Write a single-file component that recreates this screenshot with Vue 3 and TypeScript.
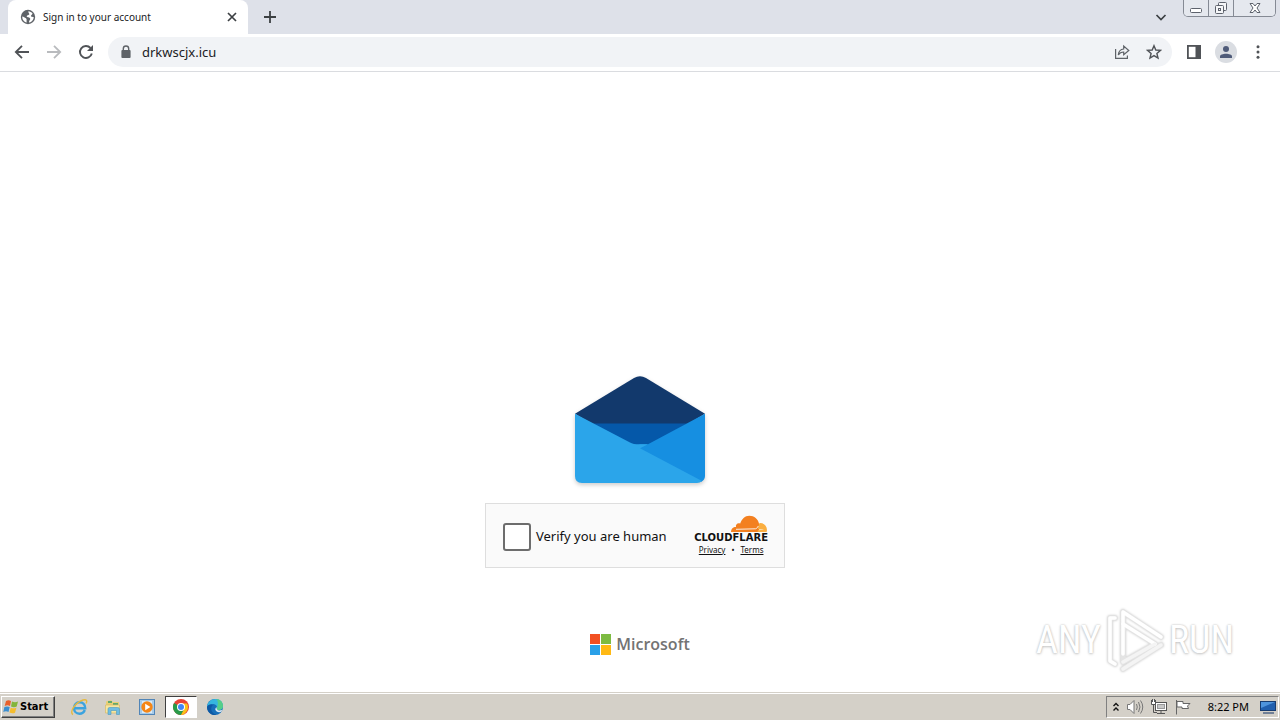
<script setup lang="ts">
import { ref } from 'vue'

const address = ref('drkwscjx.icu')
const verified = ref(false)
</script>

<template>
  <div class="desktop">
    <header class="tabstrip">
      <div class="tab">
        <svg class="favicon" viewBox="0 0 16 16" aria-hidden="true">
          <circle cx="8" cy="8" r="7.2" fill="#5f6368" />
          <path d="M8.4 2.2C8 4 9.5 4.200 9.400 5.300C9 6.500 7 5.800 6.600 7.200C7 8.700 9.200 7.700 10 9.200C10.800 10.700 9 11.200 9 13.600L10.400 13.200C12.500 12.200 13.800 10.200 13.700 8C12.800 7.800 11.300 8.200 11 7C11 5.800 12.400 5.900 12.500 4.300C11.400 3.100 10 2.300 8.400 2.200ZM2.300 7.600C3.600 7.700 4.800 8.700 5.900 9.200C7.200 9.900 6.300 11.300 6.700 13.600C3.800 13 2 10.500 2.300 7.600Z" fill="#fff" />
        </svg>
        <span class="tab-title">Sign in to your account</span>
        <button class="plain tab-close" aria-label="Close tab">
          <svg viewBox="0 0 16 16"><path d="M4 4L12 12M12 4L4 12" fill="none" stroke="#3c4043" stroke-width="1.7" /></svg>
        </button>
      </div>
      <button class="plain new-tab" aria-label="New tab">
        <svg viewBox="0 0 16 16"><path d="M8 2V14M2 8H14" fill="none" stroke="#3c4043" stroke-width="1.800" /></svg>
      </button>
      <button class="plain tab-search" aria-label="Search tabs">
        <svg viewBox="0 0 16 16"><path d="M3.500 6L8 10.500L12.500 6" fill="none" stroke="#3c4043" stroke-width="1.700" /></svg>
      </button>
      <div class="window-controls">
        <button aria-label="Minimize">
          <svg viewBox="0 0 16 16"><rect x="2.500" y="8.500" width="11" height="4" rx="1" fill="#fff" stroke="#5d626c" /></svg>
        </button>
        <button aria-label="Restore">
          <svg viewBox="0 0 16 16" fill="#f5f6f8" stroke="#5d626c"><rect x="5.500" y="2.500" width="8" height="8" rx="1" /><rect x="2.500" y="5.500" width="8" height="8" rx="1" /><rect x="5.500" y="8.500" width="2" height="2" /></svg>
        </button>
        <button class="window-close" aria-label="Close">
          <svg viewBox="0 0 16 16"><path d="M3 3.500H6L8 6L10 3.500H13L10 8L13 12.500H10L8 10L6 12.500H3L6 8Z" fill="#fff" stroke="#5d626c" /></svg>
        </button>
      </div>
    </header>

    <nav class="toolbar" aria-label="Browser">
      <button class="plain tool" aria-label="Back">
        <svg viewBox="0 0 16 16" fill="none" stroke="#505357" stroke-width="1.800"><path d="M15 8H2M8 1.800L1.800 8L8 14.200" /></svg>
      </button>
      <button class="plain tool" aria-label="Forward">
        <svg viewBox="0 0 16 16" fill="none" stroke="#b9bbbe" stroke-width="1.800"><path d="M1 8H14M8 1.800L14.200 8L8 14.200" /></svg>
      </button>
      <button class="plain tool" aria-label="Reload">
        <svg viewBox="0 0 16 16"><path d="M12.500 4A6 6 0 1 0 13.800 9.500" fill="none" stroke="#505357" stroke-width="1.900" /><path d="M15 1V7H9Z" fill="#505357" /></svg>
      </button>
      <div class="omnibox">
        <svg class="lock" viewBox="0 0 16 16" aria-hidden="true"><rect x="3.400" y="6" width="9.200" height="8" rx="1" fill="#5f6368" /><path d="M5.300 6.500V4.700A2.700 2.700 0 0 1 10.700 4.700V6.500" fill="none" stroke="#5f6368" stroke-width="1.400" /></svg>
        <input v-model="address" class="address" type="text" aria-label="Address" spellcheck="false" />
        <button class="plain" aria-label="Share">
          <svg viewBox="0 0 16 16" fill="none" stroke="#5f6368" stroke-width="1.200"><path d="M1.600 5V14.400H13.400V11.500" /><path d="M4.300 11C4.600 7.300 6.500 5.300 9.700 5V2L14.800 6.500L9.700 10.800V8C7.300 8 5.500 9 4.300 11Z" /></svg>
        </button>
        <button class="plain" aria-label="Bookmark this page">
          <svg viewBox="0 0 16 16"><path d="M8 1.700L9.800 6L14.500 6.400L10.900 9.500L12 14.100L8 11.600L4 14.100L5.100 9.500L1.500 6.400L6.200 6Z" fill="none" stroke="#505357" stroke-width="1.400" /></svg>
        </button>
      </div>
      <button class="plain tool" aria-label="Side panel">
        <svg viewBox="0 0 16 16"><rect x="1.900" y="1.900" width="12.200" height="12.200" fill="#fff" stroke="#505357" stroke-width="1.800" /><rect x="9.500" y="2" width="4.500" height="12" fill="#505357" /></svg>
      </button>
      <button class="plain avatar" aria-label="Profile">
        <svg viewBox="0 0 24 24"><circle cx="12" cy="12" r="11" fill="#dadde2" /><circle cx="12" cy="9" r="3" fill="#4f5b79" /><path d="M6 18V16.500C6 12.900 18 12.900 18 16.500V18Z" fill="#4f5b79" /></svg>
      </button>
      <button class="plain tool" aria-label="Menu">
        <svg viewBox="0 0 16 16" fill="#505357"><circle cx="8" cy="2.700" r="1.500" /><circle cx="8" cy="8" r="1.500" /><circle cx="8" cy="13.300" r="1.500" /></svg>
      </button>
    </nav>

    <main class="page">
      <svg class="envelope" viewBox="0 0 130 108" preserveAspectRatio="none" role="img" aria-label="Mail">
        <path d="M0 38L59 2Q65 -1.500 71 2L130 38L65 78Z" fill="#12396c" />
        <path d="M18 48H112L72 72H58Z" fill="#0558a9" />
        <path d="M130 38V101Q130 105 126 107L60 72L65 69H73Z" fill="#168fe1" />
        <path d="M0 38L55 67Q58 69 65 69L73 69L65 73L127 106Q125 108 122 108H7Q0 108 0 101Z" fill="#2ba5ea" />
      </svg>

      <section class="challenge" aria-label="Security check">
        <label class="verify">
          <input v-model="verified" type="checkbox" />
          <span>Verify you are human</span>
        </label>
        <div class="brand">
          <svg class="cloud" viewBox="0 0 38 18" aria-hidden="true">
            <path d="M1 17C1 13.700 3.500 11.800 6 12C5.200 9.500 7.800 7.300 10.200 8.600C11.500 4 15 0.700 19.300 0.700C24.300 0.700 28.200 4 29 8.700C30.500 11 29.500 13 28.500 17Z" fill="#f38020" />
            <path d="M29.500 8C33.800 7.700 37 10.700 37 15.200L36.600 17H27.500L28 15.300L34 14.700L28.600 14.200C27.600 14 27.600 12.600 28.300 11.700Z" fill="#faae40" />
            <path d="M6 14.300L25.500 13.800C27 13.500 27.500 12.300 28.300 11" fill="none" stroke="#fafafa" stroke-width="0.900" />
          </svg>
          <strong>CLOUDFLARE</strong>
          <div class="links"><a href="#">Privacy</a><span>•</span><a href="#">Terms</a></div>
        </div>
      </section>

      <div class="microsoft">
        <svg viewBox="0 0 21 21" aria-hidden="true"><path d="M0 0H10V10H0Z" fill="#f25022" /><path d="M11 0H21V10H11Z" fill="#7dbb42" /><path d="M0 11H10V21H0Z" fill="#2aa0e8" /><path d="M11 11H21V21H11Z" fill="#ffb914" /></svg>
        <span>Microsoft</span>
      </div>

      <div class="watermark">
        <span>ANY</span>
        <svg viewBox="0 0 60 64" fill="none" stroke-linejoin="round" stroke-linecap="round" aria-hidden="true">
          <g stroke="#e4e4e4" stroke-width="5.500"><path d="M10 10L5 10V53L10 56M18 4L56 29M18 4V46M18 61L56 37" /><path d="M18 16L50 36L18 54Z" /></g>
          <g stroke="#fff" stroke-width="3.500"><path d="M10 10L5 10V53L10 56M18 4L56 29M18 4V46" /><path d="M18 16L50 36" /></g>
          <path d="M18 54L50 36M18 61L56 37" stroke="#f4f4f4" stroke-width="3.500" />
        </svg>
        <span>RUN</span>
      </div>
    </main>

    <footer class="taskbar">
      <button class="start">
        <svg viewBox="0 0 16 16" aria-hidden="true"><path d="M3 2Q5.500 0.500 8 2L7 7Q4.500 5.700 1.700 7Z" fill="#e9602b" /><path d="M9 2.500Q12 4 15 2.500L13.700 7.500Q11 9 8 7.500Z" fill="#83b53b" /><path d="M1.400 8Q4 7 6.700 8L5.500 13Q3 11.700 0.300 13Z" fill="#3b8ed0" /><path d="M7.700 8.700Q10.500 10 13.400 8.700L12 13.700Q9.500 15 6.500 13.500Z" fill="#f5bd2e" /></svg>
        Start
      </button>
      <button class="task" aria-label="Internet Explorer">
        <svg viewBox="0 0 18 18"><path d="M14.800 12C13.800 14.600 11.800 15.700 9.500 15.700C6 15.700 4 13.200 4 10C4 6.800 6.200 4.300 9.500 4.300C13 4.300 15.200 6.700 15.200 10.200H5" fill="none" stroke="#3ba3df" stroke-width="2.400" /><path d="M3 16.500C-1 14.500 5 4.500 13 2C16.700 0.900 17.500 3 16 5.500" fill="none" stroke="#e6b93e" stroke-width="1.400" /></svg>
      </button>
      <button class="task" aria-label="File Explorer">
        <svg viewBox="0 0 18 18"><path d="M2 3.500L7 2L9 4H15V14H2Z" fill="#e9cf75" /><path d="M4 4H8M9 6H14" stroke="#63a86b" stroke-width="2" /><path d="M1.500 7H15.500V15H1.500Z" fill="#f7e6a0" stroke="#d6b968" stroke-width=".7" /><path d="M4 16.500V11Q4 9.500 5.500 9.500H13.500Q15.500 9.500 15.500 11V16.500H12.500V12.500H7V16.500Z" fill="#70bce2" stroke="#4b9abe" stroke-width=".6" /></svg>
      </button>
      <button class="task" aria-label="Media Player">
        <svg viewBox="0 0 18 18"><rect x="1.500" y="1.500" width="15" height="15" fill="#a6cbe9" stroke="#5185b7" /><rect x="4" y="3" width="10" height="12" fill="#d9eaf7" /><circle cx="9" cy="9" r="5.700" fill="#f58616" /><path d="M7.200 5.800L12.400 9L7.200 12.200Z" fill="#fff" /></svg>
      </button>
      <button class="task active" aria-label="Chrome">
        <svg viewBox="0 0 18 18"><circle cx="9" cy="9" r="8" fill="#e94335" /><path d="M9 9L2.070 5A8 8 0 0 0 9 17L12.500 11Z" fill="#299b4a" /><path d="M9 5.400H15.100A8 8 0 0 1 9 17L12.300 10.700Z" fill="#fbc116" /><circle cx="9" cy="9" r="4" fill="#fff" /><circle cx="9" cy="9" r="3" fill="#4285f4" /></svg>
      </button>
      <button class="task" aria-label="Edge">
        <svg viewBox="0 0 18 18"><circle cx="9" cy="9" r="8" fill="#176fba" /><path d="M1 9C1.500 4 5 1 9.500 1C14.500 1 17 4.500 17 8C17 10.500 15 12 12.700 12C11 12 10.300 11.300 11 10.200C11.500 7.500 9 5.900 6.500 6C4 6.100 2 7 1 9Z" fill="#36b6df" /><path d="M10.500 1.100C14.500 1.500 17 4.500 17 8C17 10.500 15 12 12.700 12C10.700 12 10.300 11.300 11 10.200C11.600 7.500 13 5 10.500 1.100Z" fill="#55ce89" /><path d="M6.800 7.300C3.800 9.500 5 15.500 10.500 16.800C6 18 1 14.500 1 9C2 6.200 6.500 6 6.800 7.300Z" fill="#0e59a4" /><path d="M10.800 9.300C10 12 12.500 13.500 16.300 11.700L15.200 13.800C10 15.500 7.500 10.500 10.800 9.300Z" fill="#dceaf4" /></svg>
      </button>
      <div class="tray">
        <button class="chevrons" aria-label="Show hidden icons"><svg viewBox="0 0 8 12" fill="none" stroke="#111" stroke-width="1.400"><path d="M1.500 5L4 2.500L6.500 5M1.500 9.500L4 7L6.500 9.500" /></svg></button>
        <button aria-label="Volume"><svg viewBox="0 0 18 18" fill="none" stroke="#777"><path d="M1.500 6.500H4L8 2.500V15.500L4 11.500H1.500Z" fill="#fff" /><path d="M10.500 6Q12 9 10.500 12M12.500 4Q15.500 9 12.500 14M14.500 2.500Q19 9 14.500 15.500" /></svg></button>
        <button aria-label="Network"><svg viewBox="0 0 18 18" stroke="#555"><rect x="5.500" y="4.500" width="11" height="8" fill="#fff" /><rect x="7.500" y="6.500" width="7" height="4" fill="#c8c8c8" stroke="#999" /><path d="M7 15.500H15M11 12.500V15.500M3.500 7V14.500H7" fill="none" /><path d="M1.500 2V6.500H5.500V2M2.500 1V4M4.500 1V4" fill="#fff" /></svg></button>
        <button aria-label="Action Center"><svg viewBox="0 0 18 18" fill="#fff" stroke="#666"><path d="M2.500 2V16.500M3 3.500H9V5.500H16L13.500 8L14.500 10.500H8V9H3Z" /></svg></button>
        <time>8:22 PM</time>
        <button aria-label="Show desktop"><svg viewBox="0 0 18 18"><rect x="1.500" y="3.500" width="15" height="9" fill="#205fae" stroke="#173c70" /><path d="M2 4H16L2 10Z" fill="#4e94dc" /><path d="M4 15H15" stroke="#718096" stroke-width="2" /></svg></button>
      </div>
    </footer>
  </div>
</template>

<style>
body { margin: 0; }
</style>

<style scoped>
.desktop { min-height: 100vh; display: flex; flex-direction: column; background: #fff; font-family: "Noto Sans", "Open Sans", sans-serif; color: #202124; }
button { font: inherit; margin: 0; padding: 0; }
svg { display: block; flex: none; }
.plain { width: 16px; height: 16px; border: 0; background: transparent; flex: none; }
.plain svg { width: 16px; height: 16px; }

.tabstrip { height: 34px; display: flex; background: #dee1e9; }
.tab { width: 240px; box-sizing: border-box; margin-left: 8px; padding: 0 8px 0 12px; display: flex; align-items: center; background: #fff; border-radius: 8px 8px 0 0; }
.favicon { width: 16px; height: 16px; }
.tab-title { flex: 1; margin-left: 7px; font-size: 10px; line-height: 16px; white-space: nowrap; }
.new-tab { align-self: center; margin-left: 14px; }
.tab-search { align-self: center; margin-left: auto; }
.window-controls { margin-left: 14px; margin-right: 4px; height: 16px; display: flex; border: 1px solid #858a94; border-top: 0; border-radius: 0 0 5px 5px; overflow: hidden; }
.window-controls button { width: 25px; border: 0; border-right: 1px solid #858a94; background: #e5e8ee; display: flex; justify-content: center; }
.window-controls .window-close { width: 41px; border-right: 0; }
.window-controls svg { width: 16px; height: 16px; }

.toolbar { height: 38px; box-sizing: border-box; display: flex; align-items: center; gap: 16px; padding: 0 14px 1px; border-bottom: 1px solid #dadce0; }
.omnibox { flex: 1; height: 30px; box-sizing: border-box; display: flex; align-items: center; gap: 16px; margin: 0 -2px; padding: 0 10px; border-radius: 15px; background: #f1f3f6; }
.lock { width: 16px; height: 16px; }
.address { flex: 1; min-width: 0; margin-left: -8px; padding: 0; border: 0; outline: 0; background: transparent; font: inherit; font-size: 13px; line-height: 20px; color: #202124; }
.avatar, .avatar svg { width: 24px; height: 24px; }
.avatar { margin: 0 -4px; }

.page { flex: 1; position: relative; box-sizing: border-box; padding: 40px 0 37px; display: flex; flex-direction: column; align-items: center; justify-content: flex-end; }
.envelope { width: 130px; height: 107px; filter: drop-shadow(0 2px 2px #0003); }
.challenge { width: 300px; height: 65px; box-sizing: border-box; margin: 20px 10px 66px 0; padding: 0 16px 0 17px; border: 1px solid #dedede; background: #fafafa; display: flex; align-items: center; justify-content: space-between; }
.verify { display: flex; align-items: center; gap: 5px; font-size: 13px; line-height: 20px; color: #111; white-space: nowrap; }
.verify input { appearance: none; width: 28px; height: 28px; box-sizing: border-box; margin: 2px 0 0; border: 2px solid #6d6d6d; border-radius: 3px; background: #fff; }
.brand { display: flex; flex-direction: column; align-items: center; }
.cloud { width: 38px; height: 18px; align-self: flex-end; }
.brand strong { font: bold 10px/10px "DejaVu Sans", sans-serif; color: #111; }
.links { display: flex; gap: 6px; font-size: 8px; line-height: 14px; color: #111; }
.links a { color: #111; }

.microsoft { display: flex; align-items: center; gap: 5px; height: 21px; font: 600 16px/21px "Open Sans", sans-serif; color: #737373; }
.microsoft svg { width: 21px; height: 21px; }
.watermark { position: absolute; right: 46px; bottom: 20px; display: flex; align-items: center; gap: 4px; font: 38px/64px "Liberation Sans Narrow", "Roboto Condensed", "Liberation Sans", sans-serif; color: #fff; text-shadow: 0 0 2px #bbb, 0 1px 3px #ccc; }
.watermark svg { width: 60px; height: 64px; filter: drop-shadow(0 0 1px #ccc); }

.taskbar { height: 28px; box-sizing: border-box; display: flex; align-items: center; padding: 0 0 0 1px; border-top: 1px solid #d4d0c8; box-shadow: inset 0 1px #fff; background: #d4d0c8; color: #000; }
.start { width: 54px; height: 22px; display: flex; align-items: center; gap: 1px; padding: 0 1px; border: 1px solid; border-color: #fff #404040 #404040 #fff; box-shadow: inset -1px -1px #808080; background: #d4d0c8; font: bold 11px/16px "DejaVu Sans Condensed", "Noto Sans", sans-serif; color: #000; }
.start svg { width: 16px; height: 16px; }
.task { width: 32px; height: 22px; box-sizing: border-box; margin-right: 2px; border: 0; background: transparent; display: flex; align-items: center; justify-content: center; }
.start + .task { margin-left: 8px; }
.task svg { width: 18px; height: 18px; }
.active { background: #fff; border: 1px solid; border-color: #404040 #fff #fff #404040; }
.tray { height: 22px; box-sizing: border-box; margin: 0 1px 0 auto; padding: 0 1px 0 5px; display: flex; align-items: center; gap: 6px; border: 1px solid; border-color: #808080 #fff #fff #808080; }
.tray button { border: 0; background: transparent; }
.tray svg { width: 18px; height: 18px; }
.tray .chevrons svg { width: 8px; height: 12px; }
.tray time { margin: 0 4px 0 10px; font-size: 11px; line-height: 16px; }
</style>
